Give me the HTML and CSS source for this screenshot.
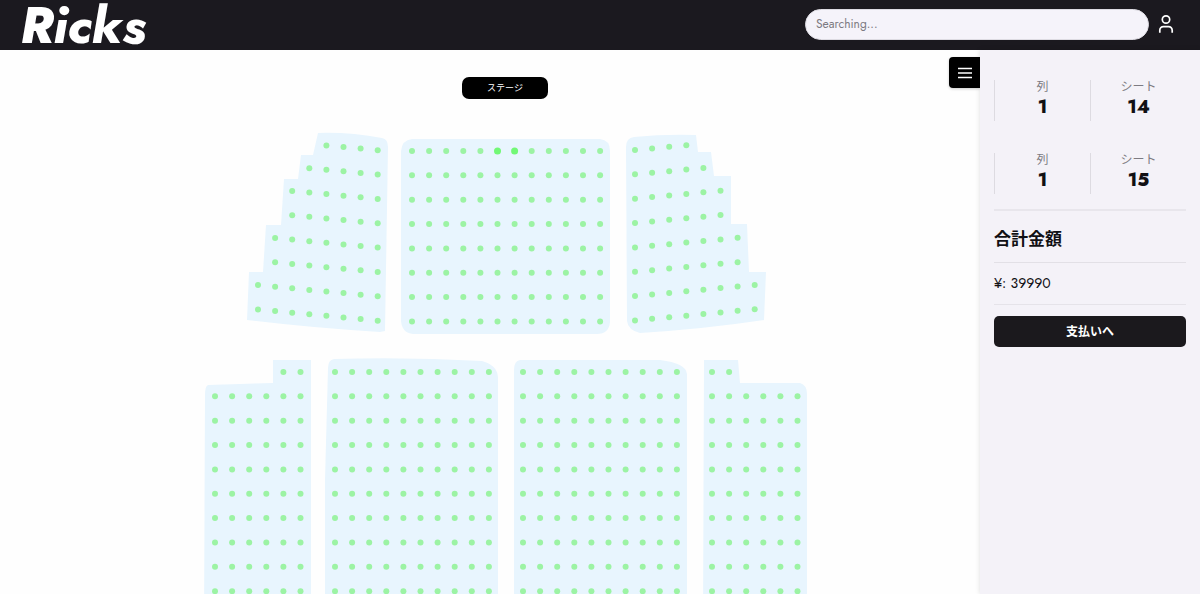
FILE: index.html
```html
<!DOCTYPE html>
<html lang="ja">
<head>
<meta charset="utf-8">
<meta name="viewport" content="width=device-width, initial-scale=1">
<title>Ricks</title>
<link rel="stylesheet" href="styles.css">
</head>
<body>
<header class="topbar">
  <a class="logo" href="#">Ricks</a>
  <form class="search" role="search">
    <input class="search-input" type="search" placeholder="Searching..." aria-label="Search">
  </form>
  <a class="account" href="#" aria-label="Account">
    <svg viewBox="0 0 16 20" width="16" height="20" fill="none" stroke="#fff" stroke-width="1.700">
      <circle cx="8" cy="5.500" r="3.700"/>
      <path d="M1.800 18.800V16.200a3.600 3.600 0 0 1 3.600-3.600h5.200a3.600 3.600 0 0 1 3.600 3.600v2.600"/>
    </svg>
  </a>
</header>
<div class="layout">
  <main class="venue">
    <svg class="map" viewBox="0 0 980 544" preserveAspectRatio="xMidYMin slice" role="img" aria-label="座席表">
      <rect class="stage" x="462" y="27" width="86" height="22" rx="7"/>
      <text class="stage-label" x="505" y="41">ステージ</text>
      <g class="blocks">
        <path d="M318 83Q350 82 382 88Q388 89 388 97L385 281L380 282Q312 278 247 270L249 222H263L266 175H281L284 129H298L301 105H313Z"/>
        <path d="M412 89H600Q610 90 610 101V272Q609 284 597 284H413Q402 283 401 271V101Q402 90 412 89Z"/>
        <path d="M634 87Q664 84 696 85L698 102H711L714 126H731V174H747L749 222H766L764 270Q704 279 640 283Q628 280 627 271L626 97Q626 88 634 87Z"/>
        <path d="M208 335Q240 334 273 333V310H311V580H204L205 345Q205 336 208 335Z"/>
        <path d="M334 309Q410 307 482 311Q497 315 498 327V580H325V430L328 318Q328 310 334 309Z"/>
        <path d="M520 310H660Q686 313 687 324V580H514V320Q514 311 520 310Z"/>
        <path d="M704 310H738L740 333H800Q807 335 807 344V580H703Z"/>
      </g>
      <g class="seats" id="seats"></g>
    </svg>
    <button class="menu" type="button" aria-label="メニュー">
      <svg viewBox="0 0 14 12" width="14" height="12" stroke="#fff" stroke-width="1.500"><path d="M0 1.500h14M0 6h14M0 10.500h14"/></svg>
    </button>
  </main>
  <aside class="cart">
    <dl class="ticket">
      <div class="cell"><dt>列</dt><dd>1</dd></div>
      <div class="cell"><dt>シート</dt><dd>14</dd></div>
    </dl>
    <dl class="ticket">
      <div class="cell"><dt>列</dt><dd>1</dd></div>
      <div class="cell"><dt>シート</dt><dd>15</dd></div>
    </dl>
    <h2 class="total-title">合計金額</h2>
    <p class="total">¥: 39990</p>
    <button class="pay" type="button">支払いへ</button>
  </aside>
</div>
<script src="seats.js"></script>
</body>
</html>
```

FILE: styles.css
```css
* {
  box-sizing: border-box;
}

body {
  margin: 0;
  height: 100vh;
  display: flex;
  flex-direction: column;
  font-family: Jost, Lato, "Noto Sans CJK JP", sans-serif;
  color: #111014;
  background: #fefefe;
}

.topbar {
  display: flex;
  align-items: center;
  gap: 8px;
  height: 50px;
  padding: 0 24px 0 20px;
  background: #1b191f;
}

.logo {
  margin-right: auto;
  font-size: 51px;
  line-height: 52px;
  font-weight: 800;
  font-style: italic;
  color: #fff;
  text-decoration: none;
}

.search {
  flex: 0 1 344px;
  margin-bottom: 2px;
}

.search-input {
  display: block;
  width: 100%;
  height: 31px;
  padding: 0 10px;
  border: 1px solid #dddbe2;
  border-radius: 16px;
  background: #f5f3fa;
  font: inherit;
  font-size: 12px;
  color: #1b191f;
  appearance: none;
}

.search-input::placeholder {
  color: #7c7a81;
  opacity: 1;
}

.account {
  display: flex;
  padding: 0 2px 2px 1px;
}

.layout {
  flex: 1;
  display: flex;
  min-height: 0;
}

.venue {
  position: relative;
  flex: 1;
  min-width: 0;
}

.map {
  display: block;
  width: 100%;
  height: 100%;
}

.stage {
  fill: #000;
}

.stage-label {
  fill: #fff;
  font-size: 9px;
  text-anchor: middle;
}

.blocks {
  fill: #e8f5fe;
}

.seats {
  fill: #9cf3a4;
}

.seats .selected {
  fill: #72f876;
}

.menu {
  position: absolute;
  top: 7px;
  right: 0;
  display: grid;
  place-items: center;
  width: 31px;
  height: 31px;
  padding: 0;
  border: 0;
  border-radius: 4px 0 0 4px;
  background: #000;
  box-shadow: 0 1px 3px #0003;
}

.cart {
  z-index: 1;
  flex: 0 0 220px;
  padding: 30px 14px 0;
  background: #f4f2f8;
  box-shadow: 0 0 5px #0002;
}

.ticket {
  display: grid;
  grid-template-columns: 1fr 1fr;
  margin: 0 0 32px;
}

.cell {
  height: 41px;
  border-left: 1px solid #dddbe1;
  text-align: center;
}

.cell dt {
  font-size: 12px;
  line-height: 14px;
  color: #7d7b82;
}

.cell dd {
  margin: 0;
  font-size: 18px;
  line-height: 26px;
  font-weight: 800;
}

.ticket + .ticket {
  margin-bottom: 15px;
}

.total-title {
  margin: 0;
  padding: 16px 0 11px;
  border-top: 2px solid #e8e6ec;
  border-bottom: 1px solid #e2e0e6;
  font-size: 17px;
  line-height: 24px;
  font-weight: 700;
}

.total {
  margin: 0 0 11px;
  padding: 10px 0;
  border-bottom: 1px solid #e5e3e9;
  font-size: 14px;
  line-height: 21px;
}

.pay {
  display: block;
  width: 100%;
  height: 31px;
  padding: 0;
  border: 0;
  border-radius: 5px;
  background: #1b191d;
  color: #fff;
  font: inherit;
  font-size: 12px;
  font-weight: 700;
}
```

FILE: seats.js
```js
// Each row is [first column, last column]; slope tilts the rows of the side blocks.
const repeat = (n, row) => Array.from({ length: n }, () => row);

const blocks = [
  { x: 258, y: 89, slope: 1.6, rows: [[4, 7], [3, 7], [2, 7], [2, 7], [1, 7], [1, 7], [0, 7], [0, 7]] },
  { x: 412, y: 101, slope: 0, rows: repeat(8, [0, 11]), selected: [5, 6] },
  { x: 635, y: 100, slope: -1.6, rows: [[0, 3], [0, 4], [0, 5], [0, 5], [0, 6], [0, 6], [0, 7], [0, 7]] },
  { x: 215, y: 322, slope: 0, rows: [[4, 5], ...repeat(9, [0, 5])] },
  { x: 335, y: 322, slope: 0, rows: repeat(10, [0, 9]) },
  { x: 523, y: 322, slope: 0, rows: repeat(10, [0, 9]) },
  { x: 712, y: 322, slope: 0, rows: [[0, 1], ...repeat(9, [0, 5])] }
];

const pitchX = 17.1;
const pitchY = 24.35;
const layer = document.getElementById("seats");

for (const block of blocks) {
  block.rows.forEach(([first, last], r) => {
    for (let c = first; c <= last; c++) {
      const seat = document.createElementNS("http://www.w3.org/2000/svg", "circle");
      const selected = r === 0 && block.selected && block.selected.includes(c);
      seat.setAttribute("cx", block.x + c * pitchX);
      seat.setAttribute("cy", block.y + r * pitchY + c * block.slope);
      seat.setAttribute("r", selected ? 3.5 : 3);
      if (selected) seat.setAttribute("class", "selected");
      layer.appendChild(seat);
    }
  });
}
```
